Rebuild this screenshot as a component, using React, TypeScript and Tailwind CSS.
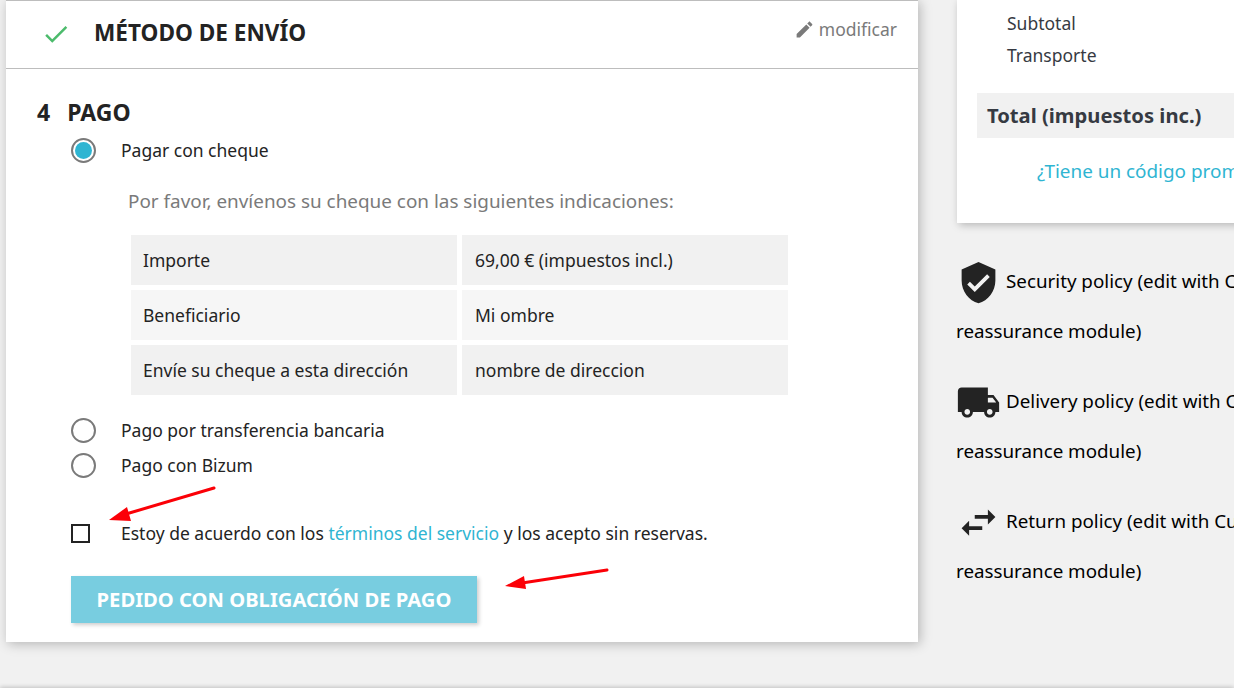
import React from "react"

const paymentRows = [
  { label: "Importe", value: "69,00 € (impuestos incl.)" },
  { label: "Beneficiario", value: "Mi ombre" },
  { label: "Envíe su cheque a esta dirección", value: "nombre de direccion" },
]

const policies = [
  {
    text: "Security policy (edit with Customer reassurance module)",
    path: "M12 1L3 5v6c0 5.55 3.84 10.74 9 12 5.16-1.26 9-6.45 9-12V5l-9-4zm-2 16l-4-4 1.41-1.41L10 14.17l6.59-6.59L18 9l-8 8z",
  },
  {
    text: "Delivery policy (edit with Customer reassurance module)",
    path: "M20 8h-3V4H3c-1.1 0-2 .9-2 2v11h2c0 1.66 1.34 3 3 3s3-1.34 3-3h6c0 1.66 1.34 3 3 3s3-1.34 3-3h2v-5l-3-4zM6 18.5c-.83 0-1.5-.67-1.5-1.5s.67-1.5 1.5-1.5 1.5.67 1.5 1.5-.67 1.5-1.5 1.5zm13.5-9l1.96 2.5H17V9.5h2.5zm-1.5 9c-.83 0-1.5-.67-1.5-1.5s.67-1.5 1.5-1.5 1.5.67 1.5 1.5-.67 1.5-1.5 1.5z",
  },
  {
    text: "Return policy (edit with Customer reassurance module)",
    path: "M6.99 11L3 15l3.99 4v-3H14v-2H6.99v-3zM21 9l-3.99-4v3H10v2h7.01v3L21 9z",
  },
]

const Radio = ({ checked }: { checked?: boolean }) => (
  <span className="flex h-[25px] w-[25px] items-center justify-center rounded-full border-2 border-[#7a7a7a] bg-white">
    {checked && <span className="h-[17px] w-[17px] rounded-full bg-[#2fb5d2]"></span>}
  </span>
)

const PaymentOption = ({ label, checked, className }: { label: string; checked?: boolean; className: string }) => (
  <div className={`flex items-center pl-[65px] ${className}`}>
    <Radio checked={checked} />
    <span className="ml-[25px]">{label}</span>
  </div>
)

const App = () => {
  return (
    <div className="relative flex h-[696px] w-[1234px] flex-col overflow-hidden bg-[#f1f1f1] font-['Noto_Sans',sans-serif] text-[17.5px] text-[#232323]">
      <div className="flex h-[688px] shrink-0 items-start pl-[6px]">
        <section className="h-[642px] w-[912px] shrink-0 border-t border-[#bdbdbd] bg-white shadow-[2px_2px_11px_rgba(0,0,0,0.25)]">
          <div className="flex h-[68px] items-center justify-between border-b border-[#bdbdbd] pr-[21px]">
            <div className="flex items-center">
              <svg viewBox="0 0 24 24" className="ml-[35px] h-[30px] w-[30px] fill-[#4cbb6c]">
                <path d="M9 16.2L4.8 12l-1.4 1.4L9 19 21 7l-1.4-1.4L9 16.2z" />
              </svg>
              <h1 className="mb-[4px] ml-[23px] text-[22.6px] font-bold">MÉTODO DE ENVÍO</h1>
            </div>
            <div className="mb-[10px] flex items-center text-[#7a7a7a]">
              <svg viewBox="0 0 24 24" className="mr-[4px] h-[21px] w-[21px] fill-[#7a7a7a]">
                <path d="M3 17.25V21h3.75L17.81 9.94l-3.75-3.75L3 17.25zM20.71 7.04c.39-.39.39-1.02 0-1.41l-2.34-2.34c-.39-.39-1.02-.39-1.41 0l-1.83 1.83 3.75 3.75 1.83-1.83z" />
              </svg>
              modificar
            </div>
          </div>

          <div className="mt-[28px] flex h-[30px] items-center pl-[31px] text-[23px] font-bold">
            <span>4</span>
            <span className="ml-[17px]">PAGO</span>
          </div>

          <PaymentOption label="Pagar con cheque" checked className="mt-[8px] h-[31px]" />

          <p className="mt-[20px] pl-[122px] text-[18.9px] leading-[30px] text-[#7a7a7a]">
            Por favor, envíenos su cheque con las siguientes indicaciones:
          </p>

          <div className="ml-[125px] mt-[19px] grid w-[657px] grid-cols-[326px_326px] gap-[5px]">
            {paymentRows.map((row, index) => (
              <React.Fragment key={row.label}>
                <div className={`flex h-[50px] items-center pl-[12px] ${index % 2 === 0 ? "bg-[#f1f1f1]" : "bg-[#f6f6f6]"}`}>{row.label}</div>
                <div className={`flex h-[50px] items-center pl-[13px] ${index % 2 === 0 ? "bg-[#f1f1f1]" : "bg-[#f6f6f6]"}`}>{row.value}</div>
              </React.Fragment>
            ))}
          </div>

          <PaymentOption label="Pago por transferencia bancaria" className="mt-[20px] h-[31px]" />
          <PaymentOption label="Pago con Bizum" className="mt-[4px] h-[31px]" />

          <div className="mt-[37px] flex h-[31px] items-center pl-[65px]">
            <span className="h-[19px] w-[19px] border-2 border-[#232323] bg-white"></span>
            <span className="ml-[31px]">
              Estoy de acuerdo con los <a className="text-[#2fb5d2]">términos del servicio</a> y los acepto sin reservas.
            </span>
          </div>

          <button
            type="button"
            className="ml-[65px] mt-[27px] flex h-[47px] w-[406px] items-center justify-center bg-[#78cde0] text-[20.2px] font-bold text-white shadow-[2px_2px_4px_rgba(0,0,0,0.2)]"
          >
            PEDIDO CON OBLIGACIÓN DE PAGO
          </button>
        </section>

        <aside className="ml-[38px] w-[400px] shrink-0">
          <div className="ml-[1px] mt-0 h-[223px] w-[316px] bg-white pl-[20px] pt-[7px] shadow-[2px_2px_8px_rgba(0,0,0,0.25)]">
            <div className="pl-[30px] text-[#363a42]">
              <div className="flex h-[32px] items-center">Subtotal</div>
              <div className="flex h-[32px] items-center">Transporte</div>
            </div>
            <div className="mt-[22px] flex h-[45px] items-center bg-[#f1f1f1] pl-[10px] text-[20.2px] font-bold text-[#363a42]">
              Total (impuestos inc.)
            </div>
            <a className="ml-[60px] mt-[18px] block whitespace-nowrap text-[18.9px] leading-[30px] text-[#2fb5d2]">
              ¿Tiene un código promocional?
            </a>
          </div>

          <div className="mt-[33px]">
            {policies.map((policy) => (
              <p key={policy.text} className="mb-[20px] text-[18.8px] leading-[50px] text-black">
                <svg viewBox="0 0 24 24" className="mr-[5px] inline-block h-[45px] w-[45px] fill-[#232323] align-middle">
                  <path d={policy.path} />
                </svg>
                {policy.text}
              </p>
            ))}
          </div>
        </aside>
      </div>

      <footer className="flex-1 bg-white shadow-[0_-1px_4px_rgba(0,0,0,0.2)]"></footer>

      {/* red annotation arrows on top of the page */}
      <svg className="pointer-events-none absolute left-0 top-0 h-[696px] w-[1234px]" viewBox="0 0 1234 696">
        <path d="M214 488L126 514" stroke="#fb0007" strokeWidth="3" strokeLinecap="round" fill="none" />
        <path d="M109 520L127 507L131 521Z" fill="#fb0007" />
        <path d="M607 570L522 583" stroke="#fb0007" strokeWidth="3" strokeLinecap="round" fill="none" />
        <path d="M505 586L524 576L526 589Z" fill="#fb0007" />
      </svg>
    </div>
  )
}

export default App
